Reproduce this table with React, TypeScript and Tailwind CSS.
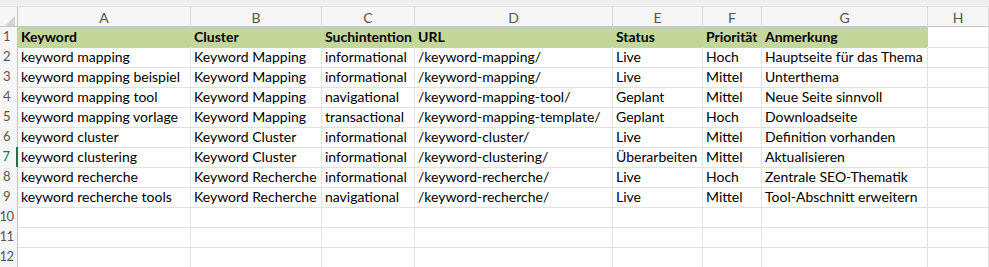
import React from "react";

const cols = ["A", "B", "C", "D", "E", "F", "G", "H"];

const data: string[][] = [
  ["Keyword", "Cluster", "Suchintention", "URL", "Status", "Priorität", "Anmerkung"],
  ["keyword mapping", "Keyword Mapping", "informational", "/keyword-mapping/", "Live", "Hoch", "Hauptseite für das Thema"],
  ["keyword mapping beispiel", "Keyword Mapping", "informational", "/keyword-mapping/", "Live", "Mittel", "Unterthema"],
  ["keyword mapping tool", "Keyword Mapping", "navigational", "/keyword-mapping-tool/", "Geplant", "Mittel", "Neue Seite sinnvoll"],
  ["keyword mapping vorlage", "Keyword Mapping", "transactional", "/keyword-mapping-template/", "Geplant", "Hoch", "Downloadseite"],
  ["keyword cluster", "Keyword Cluster", "informational", "/keyword-cluster/", "Live", "Mittel", "Definition vorhanden"],
  ["keyword clustering", "Keyword Cluster", "informational", "/keyword-clustering/", "Überarbeiten", "Mittel", "Aktualisieren"],
  ["keyword recherche", "Keyword Recherche", "informational", "/keyword-recherche/", "Live", "Hoch", "Zentrale SEO-Thematik"],
  ["keyword recherche tools", "Keyword Recherche", "navigational", "/keyword-recherche/", "Live", "Mittel", "Tool-Abschnitt erweitern"],
  [],
  [],
  [],
];

const gridCols = "grid grid-cols-[18px_173px_131px_93px_198px_90px_59px_166px_1fr]";

export default function App() {
  return (
    <div
      className="w-[989px] h-[267px] overflow-hidden bg-white text-[14px] text-black"
      style={{ fontFamily: "Lato, 'Open Sans', sans-serif" }}
    >
      <div className="h-[7px] bg-[#efefef] border-b border-[#e2e2e2]" />
      <div className={`${gridCols} h-[20px] bg-[#f6f6f6] border-b border-[#c6c6c6]`}>
        <div className="relative border-r border-[#c6c6c6]">
          <svg className="absolute right-[2px] bottom-[2px]" width="10" height="10" viewBox="0 0 10 10">
            <polygon points="10,0 10,10 0,10" fill="#d4d4d4" />
          </svg>
        </div>
        {cols.map((c) => (
          <div
            key={c}
            className="flex items-center justify-center border-r border-[#dcdcdc] text-[#555] text-[14px]"
          >
            {c}
          </div>
        ))}
      </div>
      {data.map((row, ri) => {
        const header = ri === 0;
        const active = ri === 6;
        return (
          <div key={ri} className={`${gridCols} h-[20px]`}>
            <div
              className={`flex items-center justify-center pr-[4px] text-[13px] tracking-[-0.5px] bg-[#f6f6f6] border-b border-[#e1e1e1] ${
                active ? "border-r-2 border-r-[#217346] text-[#217346]" : "border-r border-r-[#c6c6c6] text-[#555]"
              }`}
            >
              {ri + 1}
            </div>
            {cols.map((c, ci) => {
              const text = row[ci] ?? "";
              const green = header && ci < 7;
              return (
                <div
                  key={c}
                  className={`flex items-center pl-[3px] whitespace-nowrap overflow-hidden border-r border-b ${
                    green ? "bg-[#c4d79b] border-transparent font-bold" : "border-[#e1e1e1]"
                  }`}
                >
                  {text}
                </div>
              );
            })}
          </div>
        );
      })}
    </div>
  );
}
